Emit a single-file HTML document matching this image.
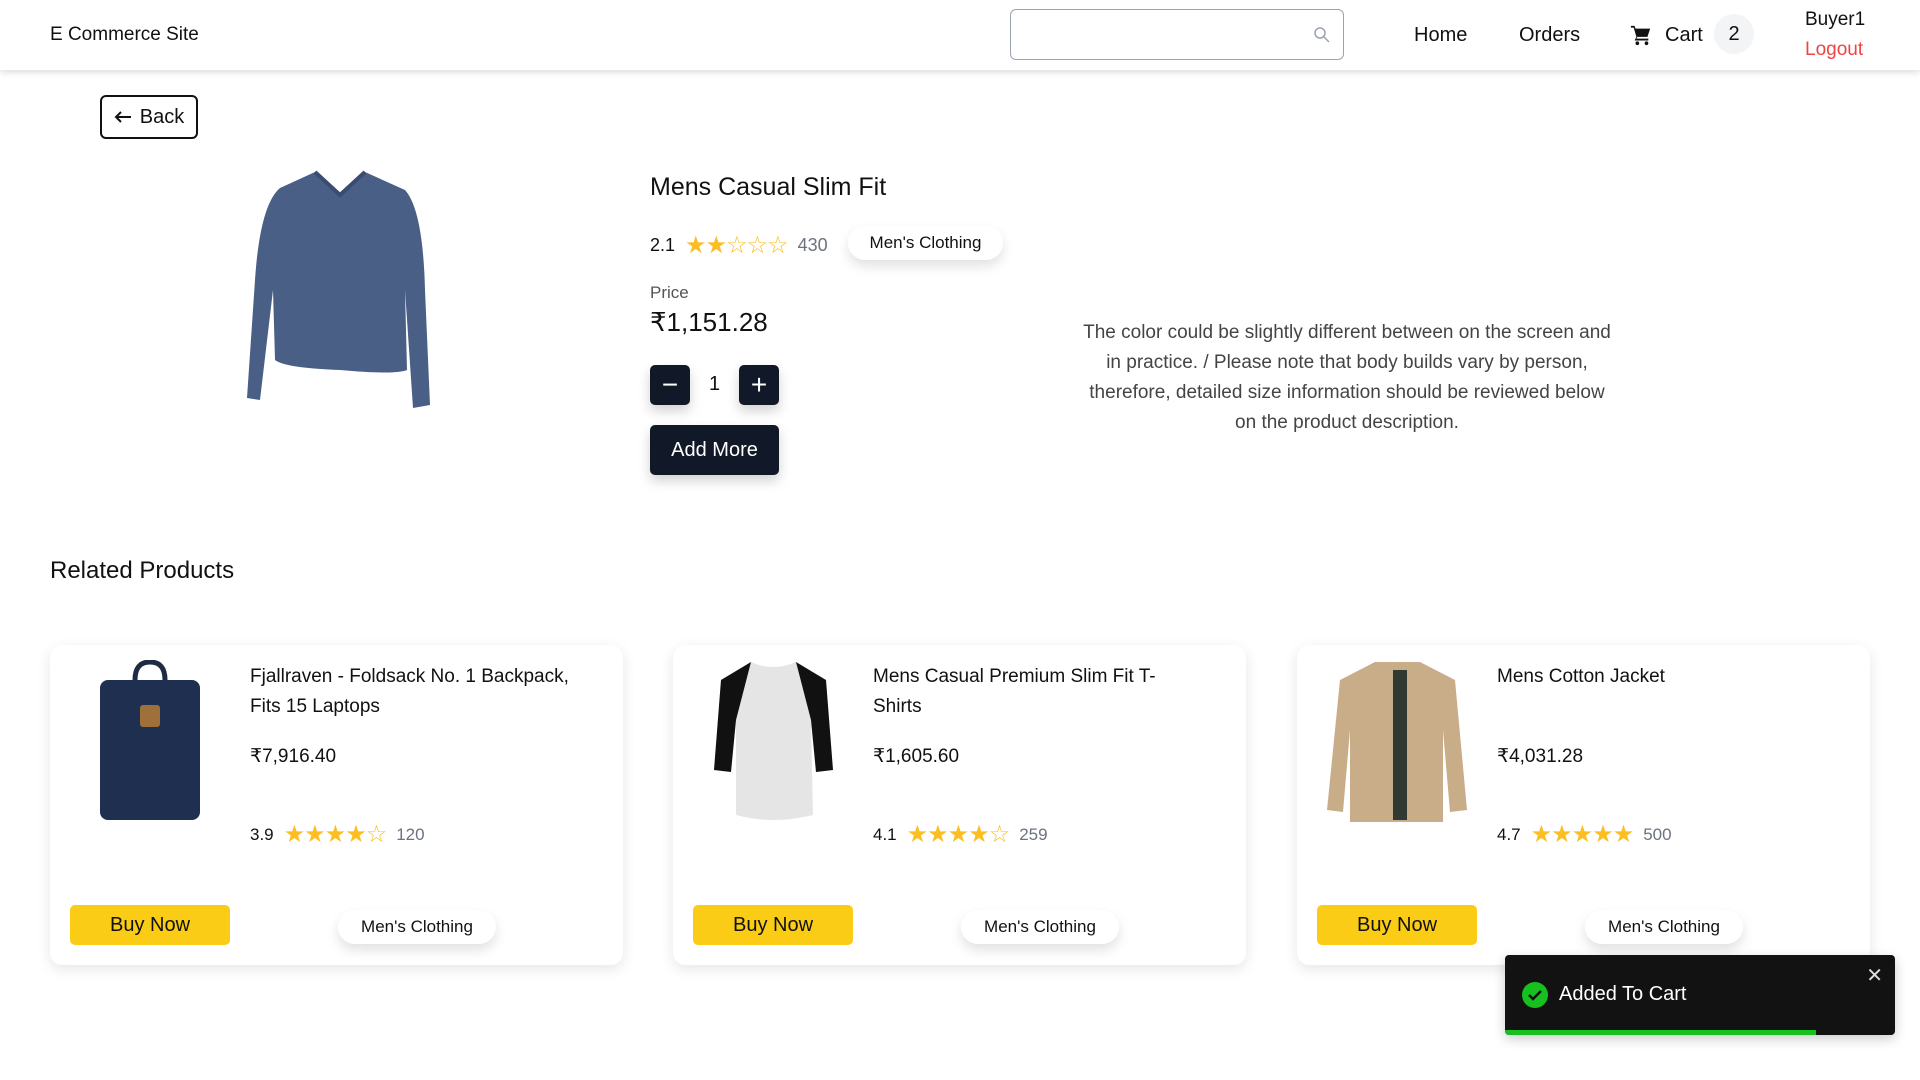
<!DOCTYPE html>
<html><head><meta charset="utf-8"><style>
*{box-sizing:border-box;margin:0;padding:0}
body{width:1920px;height:1080px;background:#fff;font-family:"Liberation Sans",sans-serif;color:#111;position:relative;overflow:hidden}
.a{position:absolute}
.nav{left:0;top:0;width:1920px;height:70px;background:#fff;box-shadow:0 3px 6px rgba(0,0,0,.12)}
.pill{background:#fff;border-radius:18px;box-shadow:0 6px 12px rgba(0,0,0,.12);font-size:17px;display:flex;align-items:center;justify-content:center}
.dark{background:#111827;color:#fff;border-radius:5px;display:flex;align-items:center;justify-content:center;box-shadow:0 6px 12px rgba(0,0,0,.18)}
.card{background:#fff;border-radius:12px;box-shadow:0 4px 14px rgba(0,0,0,.1);width:573px;height:320px;top:645px}
.buy{background:#facc15;border-radius:5px;font-size:20px;display:flex;align-items:center;justify-content:center;width:160px;height:40px}
.star{color:#fbbf24;letter-spacing:-1px}
</style></head><body>
<div class="a nav">
 <div class="a" style="left:50px;top:24px;font-size:19px">E Commerce Site</div>
 <div class="a" style="left:1010px;top:9px;width:334px;height:51px;border:1px solid #9ca3af;border-radius:6px">
  <svg class="a" style="right:12px;top:16px" width="18" height="18" viewBox="0 0 18 18"><circle cx="7" cy="7" r="5" fill="none" stroke="#9ca3af" stroke-width="1.5"/><path d="M11 11l5 5" stroke="#9ca3af" stroke-width="1.5"/></svg>
 </div>
 <div class="a" style="left:1414px;top:24px;font-size:20px">Home</div>
 <div class="a" style="left:1519px;top:24px;font-size:20px">Orders</div>
 <svg class="a" style="left:1630px;top:23px" width="22" height="24" viewBox="0 0 24 24"><path d="M1 2h4l1 3h16l-3 9H8l-1 2h13v2H5l2-4L4 4H1z" fill="#111"/><circle cx="8" cy="21" r="2" fill="#111"/><circle cx="18" cy="21" r="2" fill="#111"/></svg>
 <div class="a" style="left:1665px;top:24px;font-size:20px">Cart</div>
 <div class="a" style="left:1714px;top:14px;width:40px;height:40px;border-radius:50%;background:#f3f4f6;font-size:20px;display:flex;align-items:center;justify-content:center">2</div>
 <div class="a" style="left:1805px;top:9px;font-size:19px">Buyer1</div>
 <div class="a" style="left:1805px;top:39px;font-size:19px;color:#ef4444">Logout</div>
</div>
<div class="a" style="left:100px;top:95px;width:98px;height:44px;border:2px solid #111;border-radius:6px;font-size:20px;display:flex;align-items:center;justify-content:center;gap:8px"><svg width="18" height="14" viewBox="0 0 18 14"><path d="M17 7H2M7 2L2 7l5 5" stroke="#111" stroke-width="2" fill="none"/></svg>Back</div>
<svg class="a" style="left:245px;top:170px" width="190" height="242" viewBox="0 0 190 242">
 <path d="M70 2 L95 25 L120 2 L160 20 Q178 40 180 120 L185 235 L168 238 L160 120 L162 200 Q150 205 95 200 Q40 198 30 190 L28 120 L15 230 L2 228 L10 110 Q15 35 35 18 Z" fill="#4a5f86"/>
 <path d="M70 2 L95 25 L120 2" stroke="#3a4c70" stroke-width="4" fill="none"/>
</svg>
<div class="a" style="left:650px;top:173px;font-size:25px">Mens Casual Slim Fit</div>
<div class="a" style="left:650px;top:231px;font-size:18px;display:flex;align-items:center;gap:10px">2.1 <span class="star" style="font-size:24px">★★☆☆☆</span> <span style="color:#6b7280">430</span></div>
<div class="a pill" style="left:848px;top:226px;width:155px;height:34px">Men's Clothing</div>
<div class="a" style="left:650px;top:283px;font-size:17px;color:#555">Price</div>
<div class="a" style="left:650px;top:307px;font-size:26px">₹1,151.28</div>
<div class="a dark" style="left:650px;top:365px;width:40px;height:40px;font-size:28px">−</div>
<div class="a" style="left:709px;top:373px;font-size:20px">1</div>
<div class="a dark" style="left:739px;top:365px;width:40px;height:40px;font-size:28px">+</div>
<div class="a dark" style="left:650px;top:425px;width:129px;height:50px;font-size:20px">Add More</div>
<div class="a" style="left:1077px;top:318px;width:540px;text-align:center;font-size:19px;line-height:30px;color:#444">The color could be slightly different between on the screen and in practice. / Please note that body builds vary by person, therefore, detailed size information should be reviewed below on the product description.</div>
<div class="a" style="left:50px;top:557px;font-size:24px">Related Products</div>

<div class="a card" style="left:50px">
 <svg class="a" style="left:45px;top:15px" width="110" height="160" viewBox="0 0 110 160"><path d="M40 20 Q40 2 55 2 Q70 2 70 20" stroke="#1f2a44" stroke-width="5" fill="none"/><rect x="5" y="20" width="100" height="140" rx="8" fill="#1f2f50"/><rect x="45" y="45" width="20" height="22" rx="3" fill="#a0703a"/></svg>
 <div class="a" style="left:200px;top:17px;font-size:19px;line-height:30px;width:350px">Fjallraven - Foldsack No. 1 Backpack, Fits 15 Laptops</div>
 <div class="a" style="left:200px;top:100px;font-size:19px">₹7,916.40</div>
 <div class="a" style="left:200px;top:175px;font-size:17px;display:flex;align-items:center;gap:10px">3.9 <span class="star" style="font-size:24px">★★★★☆</span> <span style="color:#6b7280">120</span></div>
 <div class="a buy" style="left:20px;top:260px">Buy Now</div>
 <div class="a pill" style="left:288px;top:265px;width:158px;height:34px">Men's Clothing</div>
</div>
<div class="a card" style="left:673px">
 <svg class="a" style="left:38px;top:15px" width="125" height="165" viewBox="0 0 125 165"><path d="M40 2 Q62 12 85 2 L115 20 L122 110 L105 112 L100 60 L102 155 Q62 165 25 155 L25 60 L20 112 L3 110 L10 20 Z" fill="#e5e5e5"/><path d="M40 2 L10 20 L3 110 L20 112 L25 60 Z M85 2 L115 20 L122 110 L105 112 L100 60 Z" fill="#111"/></svg>
 <div class="a" style="left:200px;top:17px;font-size:19px;line-height:30px;width:320px">Mens Casual Premium Slim Fit T-Shirts</div>
 <div class="a" style="left:200px;top:100px;font-size:19px">₹1,605.60</div>
 <div class="a" style="left:200px;top:175px;font-size:17px;display:flex;align-items:center;gap:10px">4.1 <span class="star" style="font-size:24px">★★★★☆</span> <span style="color:#6b7280">259</span></div>
 <div class="a buy" style="left:20px;top:260px">Buy Now</div>
 <div class="a pill" style="left:288px;top:265px;width:158px;height:34px">Men's Clothing</div>
</div>
<div class="a card" style="left:1297px">
 <svg class="a" style="left:28px;top:15px" width="145" height="165" viewBox="0 0 145 165"><path d="M50 2 L95 2 L130 20 L142 150 L125 152 L118 70 L118 162 L25 162 L25 70 L18 152 L2 150 L15 20 Z" fill="#c9ad88"/><rect x="68" y="10" width="14" height="150" fill="#2f3a33"/></svg>
 <div class="a" style="left:200px;top:17px;font-size:19px;line-height:30px">Mens Cotton Jacket</div>
 <div class="a" style="left:200px;top:100px;font-size:19px">₹4,031.28</div>
 <div class="a" style="left:200px;top:175px;font-size:17px;display:flex;align-items:center;gap:10px">4.7 <span class="star" style="font-size:24px">★★★★★</span> <span style="color:#6b7280">500</span></div>
 <div class="a buy" style="left:20px;top:260px">Buy Now</div>
 <div class="a pill" style="left:288px;top:265px;width:158px;height:34px">Men's Clothing</div>
</div>

<div class="a" style="left:1505px;top:955px;width:390px;height:80px;background:#121212;border-radius:4px;overflow:hidden;box-shadow:0 4px 12px rgba(0,0,0,.2)">
 <svg class="a" style="left:17px;top:27px" width="26" height="26" viewBox="0 0 26 26"><circle cx="13" cy="13" r="13" fill="#16c01e"/><path d="M7 13l4 4 8-8" stroke="#111" stroke-width="2.5" fill="none"/></svg>
 <div class="a" style="left:54px;top:28px;font-size:20px;color:#fff">Added To Cart</div>
 <div class="a" style="right:12px;top:8px;font-size:20px;color:#ddd">✕</div>
 <div class="a" style="left:0;bottom:0;width:311px;height:5px;background:#16c01e"></div>
</div>
</body></html>
